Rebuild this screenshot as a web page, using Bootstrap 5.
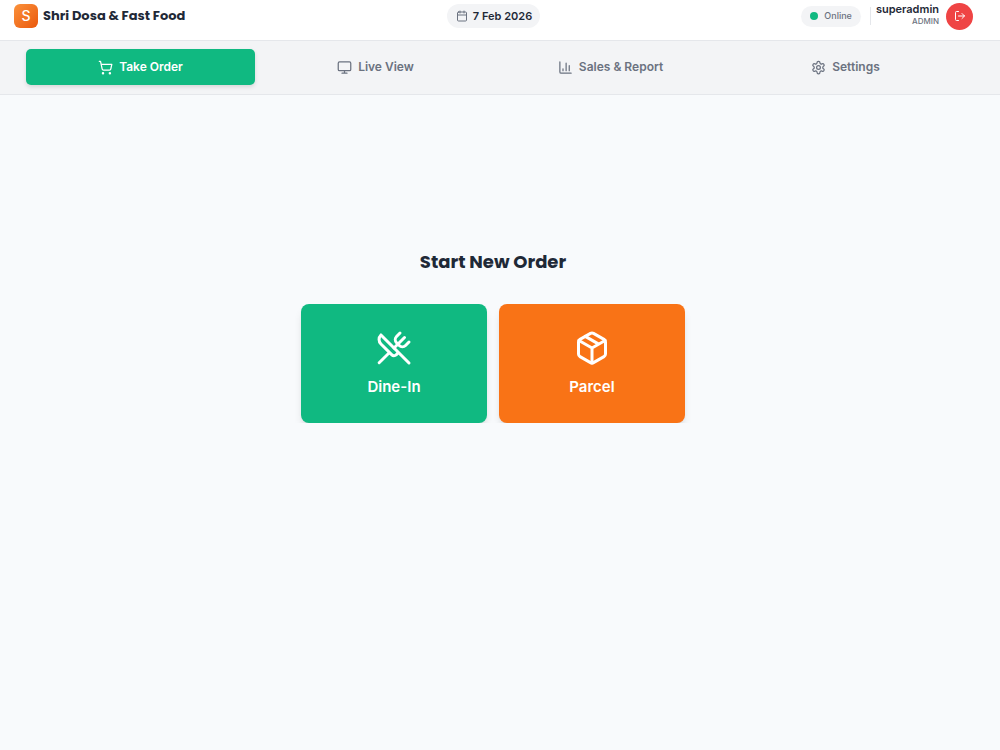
<!DOCTYPE html>
<html lang="en">
<head>
<meta charset="utf-8">
<meta name="viewport" content="width=device-width, initial-scale=1">
<title>Shri Dosa &amp; Fast Food</title>
<link href="https://cdn.jsdelivr.net/npm/bootstrap@5.3.0/dist/css/bootstrap.min.css" rel="stylesheet">
<style>
  body { font-family: Inter, "Liberation Sans", sans-serif; background: #f8fafc; color: #1f2937; font-size: 12px; line-height: 16px; }
  svg { fill: none; stroke: currentColor; stroke-width: 2; stroke-linecap: round; stroke-linejoin: round; flex: none; }
  .gutter-end { padding-right: 14px; }
  .topbar { background: #fff; border-bottom: 1px solid #e5e7eb; padding-bottom: 8px; }
  .topbar-inner { height: 32px; padding: 0 13px 0 14px; }
  .side { flex: 1 1 0; min-width: 0; gap: 5px; }
  .logo { width: 24px; height: 24px; border-radius: 6px; background: linear-gradient(135deg, #fb923c, #ea580c); color: #fff; font-size: 14px; font-weight: 500; }
  .brand-name { font-family: Poppins, Inter, sans-serif; font-size: 13px; font-weight: 700; line-height: 20px; margin: 0; }
  .pill { background: #f3f4f6; border-radius: 12px; }
  .date-pill { height: 24px; padding: 0 8px 0 9px; font-size: 11px; font-weight: 600; gap: 5px; }
  .date-pill svg { color: #6b7280; }
  .online-pill { height: 21px; padding: 0 9px; font-size: 9px; font-weight: 500; color: #6b7280; gap: 6px; }
  .dot { width: 8px; height: 8px; background: #10b981; }
  .rule { width: 1px; height: 18px; background: #e5e7eb; margin-left: 4px; }
  .user-name { font-size: 11px; font-weight: 600; line-height: 12px; }
  .user-role { font-size: 8px; font-weight: 500; line-height: 12px; color: #6b7280; padding-bottom: 2px; }
  .logout { width: 27px; height: 27px; background: #ef4444; color: #fff; margin-left: 2px; }
  .tabs { background: #f3f4f6; border-bottom: 1px solid #e5e7eb; }
  .tabs-inner { padding: 8px 26px 9px; gap: 6px; }
  .tab-btn { flex: 1 1 0; height: 36px; border: 0; border-radius: 5px; background: none; color: #6b7280; font-size: 12px; font-weight: 600; gap: 6px; }
  .tab-btn.active { background: #10b981; color: #fff; box-shadow: 0 2px 4px rgba(0,0,0,.12); }
  .tab-btn svg { margin-top: 1px; }
  .start { padding-top: 153px; }
  .start h1 { font-family: Poppins, Inter, sans-serif; font-size: 18px; font-weight: 700; line-height: 28px; margin: 0 0 28px; }
  .choices { gap: 12px; }
  .choice { width: 186px; height: 119px; border: 0; border-radius: 8px; color: #fff; font-size: 15px; font-weight: 600; line-height: 20px; gap: 11px; padding-bottom: 2px; box-shadow: 0 6px 10px -2px rgba(0,0,0,.12), 0 3px 5px -3px rgba(0,0,0,.12); }
  .choice-green { background: #10b981; }
  .choice-orange { background: #f97316; }
</style>
</head>
<body>
<header class="topbar gutter-end">
  <div class="topbar-inner d-flex align-items-center">
    <div class="side d-flex align-items-center">
      <span class="logo d-flex align-items-center justify-content-center">S</span>
      <p class="brand-name text-nowrap">Shri Dosa &amp; Fast Food</p>
    </div>
    <div class="pill date-pill d-flex align-items-center">
      <svg width="12" height="12" viewBox="0 0 24 24" aria-hidden="true"><path d="M8 2v4M16 2v4M3 10h18"/><rect x="3" y="4" width="18" height="18" rx="2"/></svg>
      <span>7 Feb 2026</span>
    </div>
    <div class="side d-flex align-items-center justify-content-end">
      <div class="pill online-pill d-flex align-items-center"><span class="dot rounded-circle"></span><span>Online</span></div>
      <span class="rule"></span>
      <div class="text-end">
        <div class="user-name">superadmin</div>
        <div class="user-role">ADMIN</div>
      </div>
      <button type="button" class="logout btn p-0 border-0 rounded-circle d-flex align-items-center justify-content-center" aria-label="Log out">
        <svg width="12" height="12" viewBox="0 0 24 24" aria-hidden="true"><path d="M9 21H5a2 2 0 0 1-2-2V5a2 2 0 0 1 2-2h4M16 17l5-5-5-5M21 12H9"/></svg>
      </button>
    </div>
  </div>
</header>
<nav class="tabs gutter-end">
  <div class="tabs-inner d-flex">
    <button type="button" class="tab-btn active d-flex align-items-center justify-content-center" aria-current="page">
      <svg width="15" height="15" viewBox="0 0 24 24" aria-hidden="true"><circle cx="8" cy="21" r="1"/><circle cx="19" cy="21" r="1"/><path d="M2.05 2.05h2l2.66 12.42a2 2 0 0 0 2 1.58h9.78a2 2 0 0 0 1.95-1.57l1.65-7.43H5.12"/></svg>
      <span>Take Order</span>
    </button>
    <button type="button" class="tab-btn d-flex align-items-center justify-content-center">
      <svg width="15" height="15" viewBox="0 0 24 24" aria-hidden="true"><rect x="2" y="3" width="20" height="14" rx="2"/><path d="M8 21h8M12 17v4"/></svg>
      <span>Live View</span>
    </button>
    <button type="button" class="tab-btn d-flex align-items-center justify-content-center">
      <svg width="15" height="15" viewBox="0 0 24 24" aria-hidden="true"><path d="M3 3v16a2 2 0 0 0 2 2h16M18 17V9M13 17V5M8 17v-3"/></svg>
      <span>Sales &amp; Report</span>
    </button>
    <button type="button" class="tab-btn d-flex align-items-center justify-content-center">
      <svg width="15" height="15" viewBox="0 0 24 24" aria-hidden="true"><path d="M12.22 2h-.44a2 2 0 0 0-2 2v.18a2 2 0 0 1-1 1.73l-.43.25a2 2 0 0 1-2 0l-.15-.08a2 2 0 0 0-2.73.73l-.22.38a2 2 0 0 0 .73 2.73l.15.1a2 2 0 0 1 1 1.72v.51a2 2 0 0 1-1 1.74l-.15.09a2 2 0 0 0-.73 2.73l.22.38a2 2 0 0 0 2.73.73l.15-.08a2 2 0 0 1 2 0l.43.25a2 2 0 0 1 1 1.73V20a2 2 0 0 0 2 2h.44a2 2 0 0 0 2-2v-.18a2 2 0 0 1 1-1.73l.43-.25a2 2 0 0 1 2 0l.15.08a2 2 0 0 0 2.73-.73l.22-.39a2 2 0 0 0-.73-2.73l-.15-.08a2 2 0 0 1-1-1.74v-.5a2 2 0 0 1 1-1.74l.15-.09a2 2 0 0 0 .73-2.73l-.22-.38a2 2 0 0 0-2.73-.73l-.15.08a2 2 0 0 1-2 0l-.43-.25a2 2 0 0 1-1-1.73V4a2 2 0 0 0-2-2z"/><circle cx="12" cy="12" r="3"/></svg>
      <span>Settings</span>
    </button>
  </div>
</nav>
<main class="start gutter-end text-center">
  <h1>Start New Order</h1>
  <div class="choices d-flex flex-wrap justify-content-center">
    <button type="button" class="choice choice-green d-flex flex-column align-items-center justify-content-center">
      <svg width="36" height="36" viewBox="0 0 24 24" aria-hidden="true"><path d="m16 2-2.3 2.3a3 3 0 0 0 0 4.2l1.8 1.8a3 3 0 0 0 4.2 0L22 8"/><path d="M15 15 3.3 3.3a4.2 4.2 0 0 0 0 6l7.3 7.3c.7.7 2 .7 2.8 0L15 15Zm0 0 7 7"/><path d="m2.1 21.8 6.4-6.3"/><path d="m19 5-7 7"/></svg>
      <span>Dine-In</span>
    </button>
    <button type="button" class="choice choice-orange d-flex flex-column align-items-center justify-content-center">
      <svg width="36" height="36" viewBox="0 0 24 24" aria-hidden="true"><path d="M11 21.73a2 2 0 0 0 2 0l7-4A2 2 0 0 0 21 16V8a2 2 0 0 0-1-1.73l-7-4a2 2 0 0 0-2 0l-7 4A2 2 0 0 0 3 8v8a2 2 0 0 0 1 1.73z"/><path d="M12 22V12M3.29 7 12 12l8.71-5M7.5 4.27l9 5.15"/></svg>
      <span>Parcel</span>
    </button>
  </div>
</main>
<script src="https://cdn.jsdelivr.net/npm/bootstrap@5.3.0/dist/js/bootstrap.bundle.min.js"></script>
</body>
</html>
